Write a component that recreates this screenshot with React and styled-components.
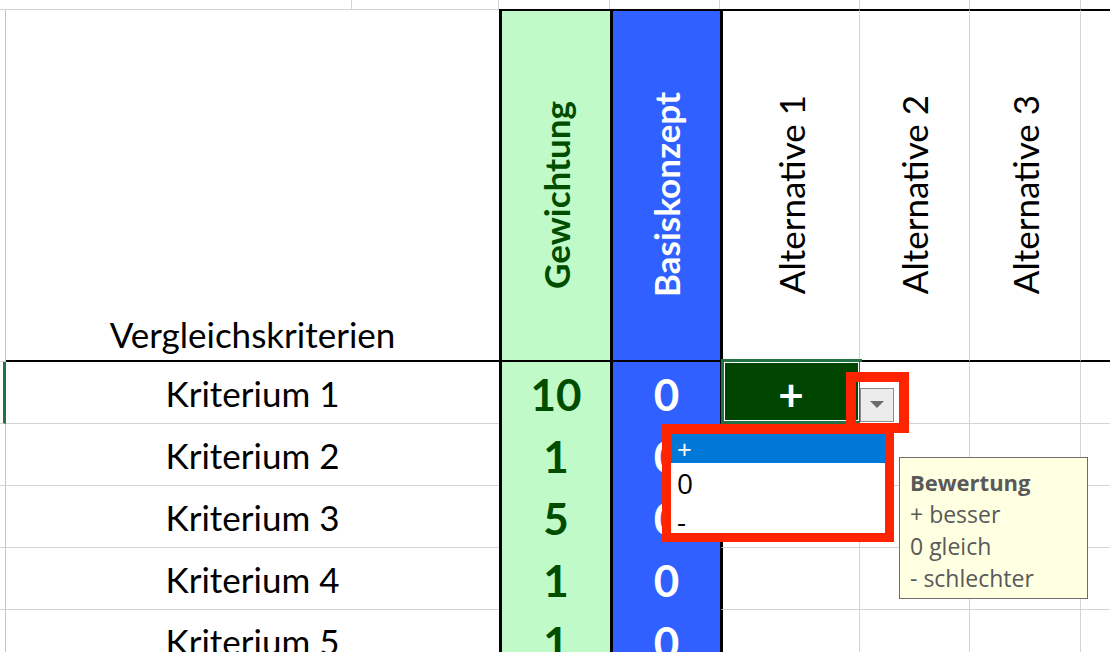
import React from "react";
import styled, { createGlobalStyle, css } from "styled-components";

const GRID = "#d4d4d4";
const BLACK = "#000";
const RED = "#ff2400";
const SHEET_FONT = `"Lato", "Liberation Sans", sans-serif`;
const UI_FONT = `"Open Sans", "Noto Sans", "Liberation Sans", sans-serif`;

const GlobalStyle = createGlobalStyle`
  html, body { margin: 0; padding: 0; background: #fff; overflow: hidden; }
  #root { width: 1110px; height: 652px; overflow: hidden; }
`;

const Sheet = styled.div`
  position: relative;
  width: 1110px;
  height: 652px;
  overflow: hidden;
  display: grid;
  grid-template-columns: 6px 346px 147px 111px 110px 140px 110px 111px 200px;
  grid-template-rows: 9px 353px repeat(5, 62px);
  font-family: ${SHEET_FONT};
  color: #000;
`;

const RowHead = styled.div`
  box-sizing: border-box;
  border-right: ${(p) => (p.$active ? "3px solid #217346" : "1px solid #c6c6c6")};
  ${(p) => p.$top && css`border-right: none;`}
  border-bottom: ${(p) => (p.$top ? "none" : "1px solid #d0d0d0")};
  ${(p) => p.$head && css`border-top: 1px solid ${GRID};`}
`;

const TopCell = styled.div`
  box-sizing: border-box;
  border-right: ${(p) => (p.$last ? "none" : `1px solid ${GRID}`)};
`;

const TitleCell = styled.div`
  grid-column: span 2;
  box-sizing: border-box;
  border-top: 1px solid ${GRID};
  border-bottom: 2px solid ${BLACK};
  display: flex;
  align-items: flex-end;
  justify-content: center;
  padding-bottom: 8px;
  font-size: 35px;
  line-height: 1;
`;

const HeadCell = styled.div`
  box-sizing: border-box;
  border-top: 2px solid ${BLACK};
  border-bottom: 2px solid ${BLACK};
  border-left: ${(p) => (p.$edge ? `3px solid ${BLACK}` : "none")};
  border-right: ${(p) => (p.$grid ? `1px solid ${GRID}` : "none")};
  background: ${(p) => p.$bg || "#fff"};
  color: ${(p) => p.$color || "#000"};
  font-weight: ${(p) => (p.$bold ? 700 : 400)};
  display: flex;
  align-items: center;
  justify-content: center;
  padding-top: 18px;
`;

const Rotated = styled.span`
  writing-mode: vertical-rl;
  transform: rotate(180deg);
  font-size: 35px;
  line-height: 1;
  white-space: nowrap;
`;

const LabelCell = styled.div`
  grid-column: span 2;
  box-sizing: border-box;
  border-bottom: 1px solid ${GRID};
  display: flex;
  align-items: center;
  justify-content: center;
  padding-top: 2px;
  font-size: 35px;
  line-height: 1;
`;

const ScoreCell = styled.div`
  box-sizing: border-box;
  border-left: 3px solid ${BLACK};
  background: ${(p) => p.$bg};
  color: ${(p) => p.$color};
  display: flex;
  align-items: center;
  justify-content: center;
  padding-top: 2px;
  font-size: 44px;
  font-weight: 700;
  line-height: 1;
`;

const RateCell = styled.div`
  position: relative;
  box-sizing: border-box;
  border-left: ${(p) => (p.$edge ? `3px solid ${BLACK}` : "none")};
  border-right: ${(p) => (p.$grid ? `1px solid ${GRID}` : "none")};
  border-bottom: 1px solid ${GRID};
  background: ${(p) => (p.$selected ? "#004600" : "#fff")};
  color: #fff;
  display: flex;
  align-items: center;
  justify-content: center;
  padding-top: 2px;
  font-size: 44px;
  font-weight: 700;
  line-height: 1;
`;

const Selection = styled.div`
  position: absolute;
  top: -3px;
  left: -2px;
  right: -3px;
  bottom: -1px;
  border: 3px solid #217346;
  box-shadow: inset 0 0 0 1px #fff;
  pointer-events: none;
`;

const Marker = styled.div`
  position: absolute;
  box-sizing: border-box;
  border: 10px solid ${RED};
  left: ${(p) => p.$x}px;
  top: ${(p) => p.$y}px;
  width: ${(p) => p.$w}px;
  height: ${(p) => p.$h}px;
`;

const DropButton = styled.div`
  position: absolute;
  left: 860px;
  top: 388px;
  width: 34px;
  height: 34px;
  box-sizing: border-box;
  background: #ececec;
  border: 1px solid #8c8c8c;
  display: flex;
  align-items: center;
  justify-content: center;
`;

const ListBox = styled.div`
  position: absolute;
  left: 662px;
  top: 424px;
  width: 232px;
  height: 118px;
  box-sizing: border-box;
  border: 9px solid ${RED};
  border-top-width: 10px;
  background: #fff;
  font-family: ${UI_FONT};
  display: flex;
  flex-direction: column;
  overflow: hidden;
`;

const ListItem = styled.div`
  height: ${(p) => p.$h}px;
  display: flex;
  align-items: center;
  padding-left: 6px;
  padding-top: ${(p) => p.$pt || 0}px;
  box-sizing: border-box;
  background: ${(p) => (p.$active ? "#0078d7" : "transparent")};
  color: ${(p) => (p.$active ? "#fff" : "#000")};
  font-size: ${(p) => (p.$active ? 26 : 28)}px;
  line-height: 1;
`;

const Tooltip = styled.div`
  position: absolute;
  left: 899px;
  top: 457px;
  width: 189px;
  height: 142px;
  box-sizing: border-box;
  background: #ffffe1;
  border: 1px solid #6e6e6e;
  padding: 8px 10px;
  font-family: ${UI_FONT};
  font-size: 23px;
  line-height: 32px;
  color: #595959;
`;

const TipTitle = styled.div`
  font-weight: 700;
  font-size: 22px;
`;

const TipLine = styled.div`
  white-space: nowrap;
`;

const rows = [
  { label: "Kriterium 1", weight: 10, base: 0, selected: true },
  { label: "Kriterium 2", weight: 1, base: 0 },
  { label: "Kriterium 3", weight: 5, base: 0 },
  { label: "Kriterium 4", weight: 1, base: 0 },
  { label: "Kriterium 5", weight: 1, base: 0 },
];

export default function App() {
  return (
    <>
      <GlobalStyle />
      <Sheet>
        <RowHead $top />
        <TopCell />
        <TopCell />
        <TopCell />
        <TopCell />
        <TopCell />
        <TopCell />
        <TopCell />
        <TopCell $last />

        <RowHead $head />
        <TitleCell>Vergleichskriterien</TitleCell>
        <HeadCell $edge $bg="#c0fac8" $color="#004d00" $bold>
          <Rotated>Gewichtung</Rotated>
        </HeadCell>
        <HeadCell $edge $bg="#3060ff" $color="#fff" $bold>
          <Rotated>Basiskonzept</Rotated>
        </HeadCell>
        <HeadCell $edge $grid>
          <Rotated>Alternative 1</Rotated>
        </HeadCell>
        <HeadCell $grid>
          <Rotated>Alternative 2</Rotated>
        </HeadCell>
        <HeadCell $grid>
          <Rotated>Alternative 3</Rotated>
        </HeadCell>
        <HeadCell />

        {rows.map((r) => (
          <React.Fragment key={r.label}>
            <RowHead $active={r.selected} />
            <LabelCell>{r.label}</LabelCell>
            <ScoreCell $bg="#c0fac8" $color="#004d00">{r.weight}</ScoreCell>
            <ScoreCell $bg="#3060ff" $color="#fff">{r.base}</ScoreCell>
            <RateCell $edge $grid $selected={r.selected}>
              {r.selected && "+"}
              {r.selected && <Selection />}
            </RateCell>
            <RateCell $grid />
            <RateCell $grid />
            <RateCell />
          </React.Fragment>
        ))}

        <Marker $x={846} $y={372} $w={63} $h={61} />
        <DropButton>
          <svg width="14" height="8" viewBox="0 0 14 8">
            <path d="M0 0 H14 L7 7 Z" fill="#6b6b6b" />
          </svg>
        </DropButton>

        <ListBox>
          <ListItem $h={29} $active>+</ListItem>
          <ListItem $h={40}>0</ListItem>
          <ListItem $h={30} $pt={6}>-</ListItem>
        </ListBox>

        <Tooltip>
          <TipTitle>Bewertung</TipTitle>
          <TipLine>+ besser</TipLine>
          <TipLine>0 gleich</TipLine>
          <TipLine>- schlechter</TipLine>
        </Tooltip>
      </Sheet>
    </>
  );
}
